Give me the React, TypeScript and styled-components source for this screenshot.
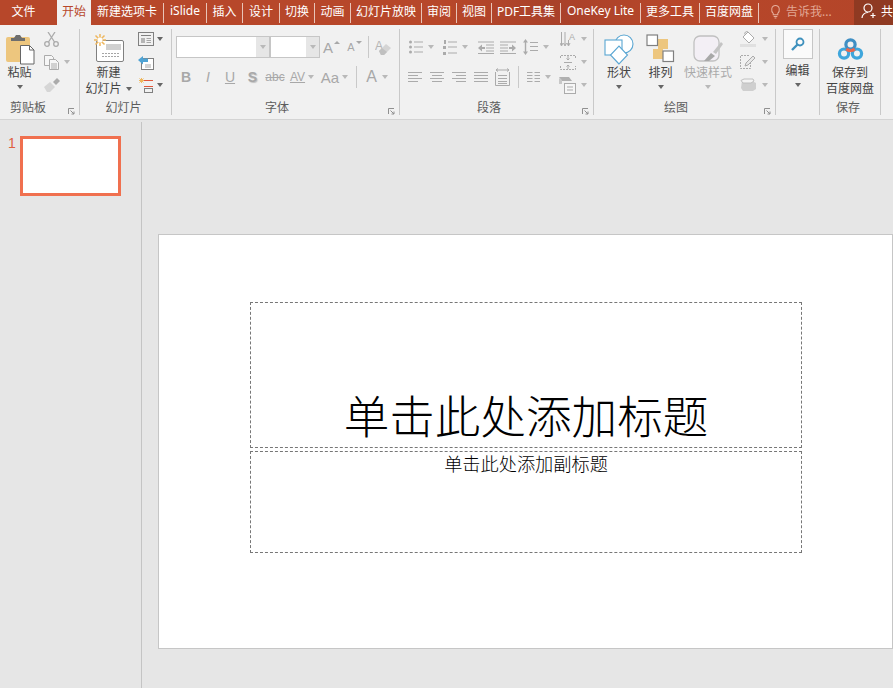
import { Fragment } from 'react'
import styled, { createGlobalStyle } from 'styled-components'

const GlobalStyle = createGlobalStyle`
  html, body {
    margin: 0;
    padding: 0;
    background: #e6e6e6;
    overflow: hidden;
  }
  body {
    font-family: "Noto Sans", "Noto Sans CJK SC", sans-serif;
  }
`

const Window = styled.div`
  width: 893px;
  height: 688px;
  display: flex;
  flex-direction: column;
  overflow: hidden;
`

const TabBar = styled.div`
  height: 25px;
  display: flex;
  align-items: center;
  background: linear-gradient(90deg, #b7472a 0%, #b7472a 50%, #a9412a 62%, #b7472a 75%, #b44529 100%);
  flex-shrink: 0;
`

const Tab = styled.div<{ $w: number; $active?: boolean; $pr?: number }>`
  width: ${p => p.$w}px;
  height: 25px;
  box-sizing: border-box;
  padding: 0 ${p => p.$pr ?? 0}px 4px 0;
  display: flex;
  align-items: center;
  justify-content: center;
  font-size: 12px;
  white-space: nowrap;
  color: ${p => (p.$active ? '#b7472a' : '#ffffff')};
  background: ${p => (p.$active ? '#f1f1f1' : 'transparent')};
`

const TabSep = styled.div`
  width: 1px;
  height: 20px;
  background: #e9c4b8;
`

const TellMe = styled.div`
  width: 95px;
  height: 25px;
  display: flex;
  align-items: center;
  gap: 5px;
  padding: 0 0 3px 11px;
  box-sizing: border-box;
  font-size: 12px;
  color: #e2a794;
`

const Share = styled.div`
  flex: 1;
  height: 25px;
  box-sizing: border-box;
  display: flex;
  align-items: center;
  gap: 4px;
  padding: 0 0 3px 7px;
  background: #8f3a22;
  color: #fff;
  font-size: 12px;
  white-space: nowrap;
  overflow: hidden;
  svg {
    flex-shrink: 0;
  }
`

const Ribbon = styled.div`
  height: 95px;
  box-sizing: border-box;
  padding-top: 4px;
  display: flex;
  background: #f1f1f1;
  border-bottom: 1px solid #d4d4d4;
  flex-shrink: 0;
`

const Group = styled.div<{ $w: number }>`
  width: ${p => p.$w}px;
  height: 86px;
  box-sizing: border-box;
  border-right: 1px solid #c9c9c9;
  display: flex;
  flex-direction: column;
  flex-shrink: 0;
`

const GroupBody = styled.div`
  height: 71px;
  display: flex;
`

const GroupFoot = styled.div`
  height: 15px;
  box-sizing: border-box;
  padding: 0 4px 0 0;
  display: flex;
  align-items: flex-end;
`

const GroupLabel = styled.div<{ $pr?: number }>`
  flex: 1;
  text-align: center;
  font-size: 12px;
  line-height: 14px;
  color: #5c5c5c;
  padding-right: ${p => p.$pr ?? 0}px;
`

const Launcher = styled.div`
  width: 7px;
  height: 7px;
  display: flex;
`

const BigButton = styled.div<{ $w: number; $pt?: number }>`
  width: ${p => p.$w}px;
  flex-shrink: 0;
  display: flex;
  flex-direction: column;
  align-items: center;
  padding-top: ${p => p.$pt ?? 4}px;
`

const BigIcon = styled.div`
  height: 32px;
  display: flex;
  align-items: center;
  justify-content: center;
`

const BigLabel = styled.div<{ $muted?: boolean }>`
  font-size: 12px;
  line-height: 16px;
  white-space: nowrap;
  display: flex;
  align-items: center;
  gap: 4px;
  color: ${p => (p.$muted ? '#aaaaaa' : '#444444')};
`

const Caret = styled.span<{ $muted?: boolean; $top?: number }>`
  display: block;
  flex-shrink: 0;
  width: 0;
  height: 0;
  margin-top: ${p => p.$top ?? 0}px;
  border-left: 3.5px solid transparent;
  border-right: 3.5px solid transparent;
  border-top: 4px solid ${p => (p.$muted ? '#b9b9b9' : '#666666')};
`

const TinyCaret = styled.span<{ $up?: boolean }>`
  display: block;
  flex-shrink: 0;
  width: 0;
  height: 0;
  margin-bottom: 9px;
  border-left: 3px solid transparent;
  border-right: 3px solid transparent;
  ${p => (p.$up ? 'border-bottom: 3px solid #a8a8a8;' : 'border-top: 3px solid #a8a8a8;')}
`

const SmallStack = styled.div<{ $w: number; $ml?: number }>`
  width: ${p => p.$w}px;
  flex-shrink: 0;
  height: 62px;
  margin-top: 2px;
  margin-left: ${p => p.$ml ?? 0}px;
  display: flex;
  flex-direction: column;
  justify-content: space-between;
`

const Slot = styled.div<{ $w: number; $h?: number; $gap?: number }>`
  width: ${p => p.$w}px;
  height: ${p => p.$h ?? 22}px;
  flex-shrink: 0;
  display: flex;
  align-items: center;
  justify-content: center;
  gap: ${p => p.$gap ?? 5}px;
`

const Rows = styled.div<{ $w?: number; $pl?: number }>`
  ${p => (p.$w ? `width: ${p.$w}px; flex-shrink: 0;` : '')}
  padding-left: ${p => p.$pl ?? 0}px;
  padding-top: 7px;
  box-sizing: border-box;
  display: flex;
  flex-direction: column;
  gap: 8px;
`

const Row = styled.div`
  height: 22px;
  display: flex;
  align-items: center;
`

const RowSep = styled.div<{ $ml: number; $mr: number }>`
  width: 1px;
  height: 22px;
  background: #c9c9c9;
  margin-left: ${p => p.$ml}px;
  margin-right: ${p => p.$mr}px;
`

const ComboBox = styled.div<{ $w: number }>`
  width: ${p => p.$w}px;
  height: 22px;
  box-sizing: border-box;
  border: 1px solid #c6c6c6;
  background: #ffffff;
  display: flex;
  justify-content: flex-end;
`

const ComboArrow = styled.div`
  width: 13px;
  background: #e6e6e6;
  display: flex;
  align-items: center;
  justify-content: center;
`

const Glyph = styled.span<{ $size?: number; $bold?: boolean; $italic?: boolean; $under?: boolean; $strike?: boolean; $shadow?: boolean }>`
  font-family: "Liberation Sans", Arial, sans-serif;
  font-size: ${p => p.$size ?? 14}px;
  line-height: 1;
  color: #a8a8a8;
  font-weight: ${p => (p.$bold ? 700 : 400)};
  font-style: ${p => (p.$italic ? 'italic' : 'normal')};
  text-decoration: ${p => (p.$under ? 'underline' : p.$strike ? 'line-through' : 'none')};
  text-shadow: ${p => (p.$shadow ? '1px 1px 1px #c0c0c0' : 'none')};
  white-space: nowrap;
`

const SearchBox = styled.div`
  width: 30px;
  height: 30px;
  box-sizing: border-box;
  border: 1px solid #c6c6c6;
  background: #fafafa;
  display: flex;
  align-items: center;
  justify-content: center;
  margin-bottom: 4px;
`

const Workspace = styled.div`
  flex: 1;
  display: flex;
  padding-top: 2px;
  min-height: 0;
`

const Sidebar = styled.div`
  width: 142px;
  flex-shrink: 0;
  box-sizing: border-box;
  border-right: 1px solid #c4c4c4;
  padding: 14px 0 0 8px;
  display: flex;
  align-items: flex-start;
`

const SlideNumber = styled.div`
  width: 12px;
  font-family: "Liberation Sans", Arial, sans-serif;
  font-size: 14px;
  line-height: 14px;
  color: #e0603f;
`

const Thumbnail = styled.div`
  width: 101px;
  height: 60px;
  box-sizing: border-box;
  border: 3px solid #f0704f;
  background: #ffffff;
`

const Stage = styled.div`
  flex: 1;
  padding: 112px 0 0 16px;
`

const Slide = styled.div`
  width: 735px;
  height: 415px;
  box-sizing: border-box;
  background: #ffffff;
  border: 1px solid #c6c6c6;
  padding: 67px 0 0 91px;
`

const Placeholder = styled.div<{ $h: number; $mt?: number; $top?: boolean }>`
  width: 552px;
  height: ${p => p.$h}px;
  margin-top: ${p => p.$mt ?? 0}px;
  box-sizing: border-box;
  border: 1px dashed #777777;
  display: flex;
  justify-content: center;
  align-items: ${p => (p.$top ? 'flex-start' : 'flex-end')};
  color: #000000;
`

const TitleText = styled.div`
  font-family: "Noto Sans CJK SC", sans-serif;
  font-weight: 300;
  font-size: 45.6px;
  line-height: 60px;
  margin-bottom: 3px;
`

const SubtitleText = styled.div`
  font-family: "Noto Sans CJK SC", sans-serif;
  font-weight: 300;
  font-size: 18.2px;
  line-height: 22px;
`

const GRAY = '#ababab'

const PasteIcon = () => (
  <svg width="30" height="32" viewBox="0 0 30 32">
    <rect x="1" y="4" width="24" height="25" rx="2" fill="#edc67e" />
    <path d="M6 5h3l2-3h4l2 3h3v3H6z" fill="#6e6e6e" />
    <path d="M15.5 12.5h9l4.5 4.5v14H15.5z" fill="#fff" stroke="#666" />
    <path d="M24.5 12.5V17H29" fill="none" stroke="#666" />
  </svg>
)

const ScissorsIcon = () => (
  <svg width="15" height="15" viewBox="0 0 15 15" fill="none" stroke={GRAY} strokeWidth="1.3">
    <circle cx="3" cy="12" r="2.3" />
    <circle cx="12" cy="12" r="2.3" />
    <path d="M4.5 10L11 0M10.5 10L4 0" />
  </svg>
)

const CopyIcon = () => (
  <svg width="15" height="15" viewBox="0 0 15 15" fill="#f6f6f6" stroke={GRAY}>
    <path d="M.5.5h7l2 2v8h-9z" />
    <path d="M5.5 4.5h6l3 3v7h-9z" />
    <path d="M7 9h6M7 11h6M7 13h6" />
  </svg>
)

const BrushIcon = () => (
  <svg width="18" height="14" viewBox="0 0 18 14">
    <path d="M1 9l6-5 5 5-5 5H4z" fill="#d6d6d6" />
    <path d="M10 4l4-4 3 3-4 4z" fill={GRAY} />
  </svg>
)

const NewSlideIcon = () => (
  <svg width="32" height="30" viewBox="0 0 32 30">
    <rect x="3.5" y="6.5" width="27" height="21" rx="1.5" fill="#fff" stroke="#808080" />
    <rect x="13" y="10" width="15" height="6" fill="#d0d0d0" />
    <path d="M9 19.5h17M9 22.5h17" stroke="#a6a6a6" strokeDasharray="2 1" />
    <path d="M7 0v12M1 6h12M2.5 1.5l9 9M11.5 1.5l-9 9" stroke="#eeb75e" strokeWidth="1.5" />
    <circle cx="7" cy="6" r="2.5" fill="#fff" />
  </svg>
)

const LayoutIcon = () => (
  <svg width="16" height="14" viewBox="0 0 16 14" fill="none" stroke="#808080">
    <rect x=".5" y=".5" width="15" height="13" />
    <path d="M3 3.5h10" />
    <rect x="3" y="6" width="4" height="5" fill="#b5b5b5" stroke="none" />
    <path d="M8.5 6.5H13M8.5 8.5H13M8.5 10.5H13" stroke="#a6a6a6" />
  </svg>
)

const ResetIcon = () => (
  <svg width="17" height="15" viewBox="0 0 17 15">
    <rect x="4.5" y="3.5" width="12" height="11" fill="#fff" stroke="#808080" />
    <path d="M8 10h6M8 12h6" stroke="#a6a6a6" />
    <path d="M1 5l5-4v2.5h5V7H6v2.5z" fill="#4fa3d4" />
  </svg>
)

const SectionIcon = () => (
  <svg width="16" height="15" viewBox="0 0 16 15" fill="none">
    <path d="M1 2.5h5M3.5 0v5M1.5.5l4 4M5.5.5l-4 4" stroke="#eeb75e" />
    <path d="M6 2.5h9" stroke="#e2573a" />
    <path d="M6 8.5h9" stroke="#e2573a" />
    <rect x="6.5" y="10.5" width="8" height="4" stroke="#808080" />
  </svg>
)

const ClearFormatIcon = () => (
  <svg width="17" height="17" viewBox="0 0 17 17">
    <text x="0" y="11" fontSize="12" fill="#b5b5b5" fontFamily="Liberation Sans">A</text>
    <path d="M4 12l7-7 5 4-7 7H6z" fill="#d4d4d4" />
    <path d="M4 12l3-3 5 4-3 3H6z" fill="#c0c0c0" />
  </svg>
)

const BulletsIcon = () => (
  <svg width="14" height="14" viewBox="0 0 14 14" fill={GRAY}>
    <circle cx="1.5" cy="2" r="1.5" /><circle cx="1.5" cy="7" r="1.5" /><circle cx="1.5" cy="12" r="1.5" />
    <path d="M5 1.5h9v1H5zM5 6.5h9v1H5zM5 11.5h9v1H5z" />
  </svg>
)

const NumberingIcon = () => (
  <svg width="14" height="15" viewBox="0 0 14 15" fill={GRAY}>
    <rect x="1" y="0" width="2" height="4" /><rect x="0" y="6" width="3" height="3" /><rect x="0" y="12" width="3" height="3" />
    <path d="M5 1.5h9v1H5zM5 6.5h9v1H5zM5 12.5h9v1H5z" />
  </svg>
)

const IndentIcon = ({ flip }: { flip?: boolean }) => (
  <svg width="16" height="13" viewBox="0 0 16 13" fill={GRAY} style={flip ? { transform: 'scaleX(-1)' } : undefined}>
    <path d="M0 .5h16v1H0zM8 3.5h8v1H8zM8 6.5h8v1H8zM8 9.5h8v1H8zM0 12h16v1H0z" />
    <path d="M0 7l4-3.5V6h3v2H4v2.5z" />
  </svg>
)

const LineSpacingIcon = () => (
  <svg width="15" height="16" viewBox="0 0 15 16" fill={GRAY}>
    <path d="M2.5 0L5 3.5H3.2v9H5L2.5 16 0 12.5h1.8v-9H0z" />
    <path d="M7 3h8v1H7zM7 7h8v1H7zM7 11h8v1H7z" />
  </svg>
)

const TextDirectionIcon = () => (
  <svg width="16" height="15" viewBox="0 0 16 15" fill="none" stroke={GRAY}>
    <path d="M1.5 0v13M5 0v13M8.5 8v5" />
    <path d="M0 11l1.5 3L3 11M3.5 11L5 14l1.5-3M7 11l1.5 3 1.5-3" />
    <text x="9" y="8" fontSize="9" fill={GRAY} stroke="none" fontFamily="Liberation Sans">A</text>
  </svg>
)

const TextAlignIcon = () => (
  <svg width="16" height="15" viewBox="0 0 16 15" fill="none" stroke={GRAY}>
    <path d="M.5 3V.5h15V3M.5 11v3.5h15V11" strokeDasharray="2 1" />
    <path d="M4 7.5h8" />
    <path d="M8 1v4M6.5 3.5L8 5l1.5-1.5M8 14v-4M6.5 11.5L8 10l1.5 1.5" />
  </svg>
)

const SmartArtIcon = () => (
  <svg width="17" height="17" viewBox="0 0 17 17">
    <path d="M0 0h10l3 4H3z" fill="#b0b0b0" />
    <path d="M0 1v6h3V3z" fill="#c8c8c8" />
    <rect x="5.5" y="6.5" width="11" height="10" fill="#f6f6f6" stroke={GRAY} />
    <path d="M8 10h6M8 13h6" stroke={GRAY} />
  </svg>
)

const AlignIcon = ({ mode }: { mode: 'left' | 'center' | 'right' | 'justify' }) => {
  const lines: Record<string, string> = {
    left: 'M0 .5h14M0 3.5h10M0 6.5h14M0 9.5h10',
    center: 'M0 .5h14M2 3.5h10M0 6.5h14M2 9.5h10',
    right: 'M0 .5h14M4 3.5h10M0 6.5h14M4 9.5h10',
    justify: 'M0 .5h14M0 3.5h14M0 6.5h14M0 9.5h14'
  }
  return (
    <svg width="14" height="10" viewBox="0 0 14 10" fill="none" stroke={GRAY}>
      <path d={lines[mode]} />
    </svg>
  )
}

const DistributeIcon = () => (
  <svg width="15" height="18" viewBox="0 0 15 18" fill="none" stroke={GRAY}>
    <path d="M.5 4v13.5h14V4" />
    <path d="M3 7.5h9M3 10.5h9M3 13.5h9M3 15.5h9" />
    <path d="M1 2h13M1 2l2-1.5M1 2l2 1.5M14 2l-2-1.5M14 2l-2 1.5" />
  </svg>
)

const ColumnsIcon = () => (
  <svg width="13" height="10" viewBox="0 0 13 10" fill="none" stroke={GRAY}>
    <path d="M0 .5h5.5M7.5.5H13M0 3.5h5.5M7.5 3.5H13M0 6.5h5.5M7.5 6.5H13M0 9.5h5.5M7.5 9.5H13" />
  </svg>
)

const ShapesIcon = () => (
  <svg width="30" height="31" viewBox="0 0 30 31" fill="none" stroke="#5aa6d2" strokeWidth="1.1">
    <circle cx="20" cy="10" r="9" fill="#fff" />
    <rect x="1" y="6" width="17" height="15" fill="#fff" />
    <path d="M15 30l-8.5-9 8.5-9 8.5 9z" fill="#fff" />
  </svg>
)

const ArrangeIcon = () => (
  <svg width="29" height="30" viewBox="0 0 29 30">
    <rect x="12" y="5" width="10" height="10" fill="#edc67e" />
    <rect x="7" y="15" width="10" height="10" fill="#edc67e" />
    <rect x="1" y="1" width="10.5" height="10.5" fill="#fff" stroke="#808080" strokeWidth="1.2" />
    <rect x="17" y="17" width="10.5" height="10.5" fill="#fff" stroke="#808080" strokeWidth="1.2" />
  </svg>
)

const QuickStyleIcon = () => (
  <svg width="32" height="30" viewBox="0 0 32 30">
    <rect x="2" y="2" width="25" height="25" rx="6" fill="#f3eff5" stroke="#c0c0c0" strokeWidth="1.3" />
    <path d="M12 27l7-8 4 3-6 5z" fill="#a8a8a8" />
    <path d="M21 18l8-10 2 2-7 10z" fill="#c4c4c4" />
  </svg>
)

const FillIcon = () => (
  <svg width="17" height="16" viewBox="0 0 17 16">
    <path d="M8 1l6 6-5 5-6-6z" fill="#fff" stroke={GRAY} />
    <path d="M5 3.5a2 2 0 0 1 3-2.5" fill="none" stroke={GRAY} />
    <rect x="0" y="13" width="16" height="3" fill="#e0e0e0" />
  </svg>
)

const OutlineIcon = () => (
  <svg width="17" height="15" viewBox="0 0 17 15" fill="none">
    <path d="M9 .5H.5v13h10V8" stroke={GRAY} strokeDasharray="2 1" />
    <path d="M5 11l1-3 7-7 2 2-7 7z" fill="#e8e8e8" stroke={GRAY} />
  </svg>
)

const EffectIcon = () => (
  <svg width="17" height="14" viewBox="0 0 17 14">
    <path d="M2 3h10l4 2v6l-3 2H3l-2-3z" fill="#cfcfcf" />
    <path d="M1 2.5L4 1h9l1 2-3 2H3z" fill="#f4f4f4" stroke="#c0c0c0" />
  </svg>
)

const SearchIcon = () => (
  <svg width="14" height="15" viewBox="0 0 14 15" fill="none">
    <circle cx="9" cy="5" r="3.5" stroke="#3f91bd" strokeWidth="1.8" />
    <path d="M6.5 7.5L1 13" stroke="#3f91bd" strokeWidth="2.4" />
  </svg>
)

const BaiduIcon = () => (
  <svg width="27" height="24" viewBox="0 0 28 26" fill="none">
    <circle cx="7" cy="18" r="5" stroke="#3fa6dc" strokeWidth="3.5" />
    <circle cx="21" cy="18" r="5" stroke="#3fa6dc" strokeWidth="3.5" />
    <circle cx="14" cy="8" r="5" stroke="#3f8fc4" strokeWidth="3.5" />
    <path d="M9.5 13a6.5 6.5 0 0 0 9 0" stroke="#e9674e" strokeWidth="3.5" />
  </svg>
)

const LauncherIcon = () => (
  <Launcher>
    <svg width="7" height="7" viewBox="0 0 7 7" fill="none" stroke="#909090">
      <path d="M.5 6V.5H6" />
      <path d="M2.5 2.5L6 6M6 3.5V6H3.5" />
    </svg>
  </Launcher>
)

const BulbIcon = () => (
  <svg width="11" height="15" viewBox="0 0 12 15" fill="none" stroke="#e6b09e" strokeWidth="1.1">
    <path d="M3.5 9.5C1 7.5 1 1 6 1s5 6.5 2.500 8.5V11h-5z" />
    <path d="M4 13h4M5 14.5h2" />
  </svg>
)

const PersonIcon = () => (
  <svg width="16" height="16" viewBox="0 0 16 16" fill="none" stroke="#fff" strokeWidth="1.2">
    <circle cx="7" cy="5" r="4" />
    <path d="M1 15c0-3 2.5-5.5 6-5.5M12 10v5M9.5 12.5h5" />
  </svg>
)

const tabs = [
  { label: '新建选项卡', w: 72 },
  { label: 'iSlide', w: 42 },
  { label: '插入', w: 35 },
  { label: '设计', w: 36 },
  { label: '切换', w: 34 },
  { label: '动画', w: 35 },
  { label: '幻灯片放映', w: 70 },
  { label: '审阅', w: 34 },
  { label: '视图', w: 34 },
  { label: 'PDF工具集', w: 68 },
  { label: 'OneKey Lite', w: 79 },
  { label: '更多工具', w: 58 },
  { label: '百度网盘', w: 58 }
]

const App = () => {
  return (
    <Window>
      <GlobalStyle />
      <TabBar>
        <Tab $w={57} $pr={10}>文件</Tab>
        <Tab $w={34} $active>开始</Tab>
        {tabs.map(t => (
          <Fragment key={t.label}>
            <Tab $w={t.w}>{t.label}</Tab>
            <TabSep />
          </Fragment>
        ))}
        <TellMe>
          <BulbIcon />
          告诉我...
        </TellMe>
        <Share>
          <PersonIcon />
          共
        </Share>
      </TabBar>

      <Ribbon>
        <Group $w={80}>
          <GroupBody>
            <BigButton $w={39}>
              <BigIcon><PasteIcon /></BigIcon>
              <BigLabel>粘贴</BigLabel>
              <Caret $top={4} />
            </BigButton>
            <SmallStack $w={30} $ml={4}>
              <Slot $w={16} $h={16}><ScissorsIcon /></Slot>
              <Slot $w={27} $h={16}><CopyIcon /><Caret $muted /></Slot>
              <Slot $w={18} $h={16}><BrushIcon /></Slot>
            </SmallStack>
          </GroupBody>
          <GroupFoot>
            <GroupLabel $pr={12}>剪贴板</GroupLabel>
            <LauncherIcon />
          </GroupFoot>
        </Group>

        <Group $w={92}>
          <GroupBody>
            <BigButton $w={57}>
              <BigIcon><NewSlideIcon /></BigIcon>
              <BigLabel>新建</BigLabel>
              <BigLabel>幻灯片<Caret /></BigLabel>
            </BigButton>
            <SmallStack $w={30}>
              <Slot $w={26} $h={16} $gap={3}><LayoutIcon /><Caret /></Slot>
              <Slot $w={17} $h={16}><ResetIcon /></Slot>
              <Slot $w={26} $h={16} $gap={3}><SectionIcon /><Caret /></Slot>
            </SmallStack>
          </GroupBody>
          <GroupFoot>
            <GroupLabel>幻灯片</GroupLabel>
          </GroupFoot>
        </Group>

        <Group $w={228}>
          <GroupBody>
            <Rows>
              <Row>
                <Slot $w={4} />
                <ComboBox $w={94}><ComboArrow><Caret $muted /></ComboArrow></ComboBox>
                <ComboBox $w={50}><ComboArrow><Caret $muted /></ComboArrow></ComboBox>
                <Slot $w={23} $gap={1}><Glyph $size={15}>A</Glyph><TinyCaret $up /></Slot>
                <Slot $w={23} $gap={1}><Glyph $size={11}>A</Glyph><TinyCaret /></Slot>
                <RowSep $ml={2} $mr={6} />
                <ClearFormatIcon />
              </Row>
              <Row>
                <Slot $w={3} />
                <Slot $w={22}><Glyph $bold>B</Glyph></Slot>
                <Slot $w={22}><Glyph $italic>I</Glyph></Slot>
                <Slot $w={22}><Glyph $under>U</Glyph></Slot>
                <Slot $w={23}><Glyph $bold $shadow>S</Glyph></Slot>
                <Slot $w={22}><Glyph $strike $size={12}>abc</Glyph></Slot>
                <Slot $w={32} $gap={3}><Glyph $under $size={12}>AV</Glyph><Caret $muted /></Slot>
                <Slot $w={33} $gap={3}><Glyph $size={15}>Aa</Glyph><Caret $muted /></Slot>
                <RowSep $ml={5} $mr={5} />
                <Slot $w={30}><Glyph $size={16}>A</Glyph><Caret $muted /></Slot>
              </Row>
            </Rows>
          </GroupBody>
          <GroupFoot>
            <GroupLabel $pr={6}>字体</GroupLabel>
            <LauncherIcon />
          </GroupFoot>
        </Group>

        <Group $w={194}>
          <GroupBody>
            <Rows $w={156} $pl={4}>
              <Row>
                <Slot $w={35}><BulletsIcon /><Caret $muted /></Slot>
                <Slot $w={32}><NumberingIcon /><Caret $muted /></Slot>
                <Slot $w={4} />
                <Slot $w={22}><IndentIcon /></Slot>
                <Slot $w={22}><IndentIcon flip /></Slot>
                <Slot $w={34}><LineSpacingIcon /><Caret $muted /></Slot>
              </Row>
              <Row>
                <Slot $w={22}><AlignIcon mode="left" /></Slot>
                <Slot $w={22}><AlignIcon mode="center" /></Slot>
                <Slot $w={22}><AlignIcon mode="right" /></Slot>
                <Slot $w={22}><AlignIcon mode="justify" /></Slot>
                <Slot $w={21}><DistributeIcon /></Slot>
                <RowSep $ml={5} $mr={3} />
                <Slot $w={33}><ColumnsIcon /><Caret $muted /></Slot>
              </Row>
            </Rows>
            <SmallStack $w={34}>
              <Slot $w={34} $h={16}><TextDirectionIcon /><Caret $muted /></Slot>
              <Slot $w={34} $h={16}><TextAlignIcon /><Caret $muted /></Slot>
              <Slot $w={34} $h={16}><SmartArtIcon /><Caret $muted /></Slot>
            </SmallStack>
          </GroupBody>
          <GroupFoot>
            <GroupLabel $pr={4}>段落</GroupLabel>
            <LauncherIcon />
          </GroupFoot>
        </Group>

        <Group $w={182}>
          <GroupBody>
            <BigButton $w={50}>
              <BigIcon><ShapesIcon /></BigIcon>
              <BigLabel>形状</BigLabel>
              <Caret $top={4} />
            </BigButton>
            <BigButton $w={33}>
              <BigIcon><ArrangeIcon /></BigIcon>
              <BigLabel>排列</BigLabel>
              <Caret $top={4} />
            </BigButton>
            <BigButton $w={62}>
              <BigIcon><QuickStyleIcon /></BigIcon>
              <BigLabel $muted>快速样式</BigLabel>
              <Caret $muted $top={4} />
            </BigButton>
            <SmallStack $w={32}>
              <Slot $w={29} $h={16}><FillIcon /><Caret $muted /></Slot>
              <Slot $w={29} $h={16}><OutlineIcon /><Caret $muted /></Slot>
              <Slot $w={29} $h={16}><EffectIcon /><Caret $muted /></Slot>
            </SmallStack>
          </GroupBody>
          <GroupFoot>
            <GroupLabel $pr={6}>绘图</GroupLabel>
            <LauncherIcon />
          </GroupFoot>
        </Group>

        <Group $w={44}>
          <GroupBody>
            <BigButton $w={43} $pt={0}>
              <SearchBox><SearchIcon /></SearchBox>
              <BigLabel>编辑</BigLabel>
              <Caret $top={4} />
            </BigButton>
          </GroupBody>
          <GroupFoot />
        </Group>

        <Group $w={61}>
          <GroupBody>
            <BigButton $w={60}>
              <BigIcon><BaiduIcon /></BigIcon>
              <BigLabel>保存到</BigLabel>
              <BigLabel>百度网盘</BigLabel>
            </BigButton>
          </GroupBody>
          <GroupFoot>
            <GroupLabel>保存</GroupLabel>
          </GroupFoot>
        </Group>
      </Ribbon>

      <Workspace>
        <Sidebar>
          <SlideNumber>1</SlideNumber>
          <Thumbnail />
        </Sidebar>
        <Stage>
          <Slide>
            <Placeholder $h={146}>
              <TitleText>单击此处添加标题</TitleText>
            </Placeholder>
            <Placeholder $h={102} $mt={3} $top>
              <SubtitleText>单击此处添加副标题</SubtitleText>
            </Placeholder>
          </Slide>
        </Stage>
      </Workspace>
    </Window>
  )
}

export default App
